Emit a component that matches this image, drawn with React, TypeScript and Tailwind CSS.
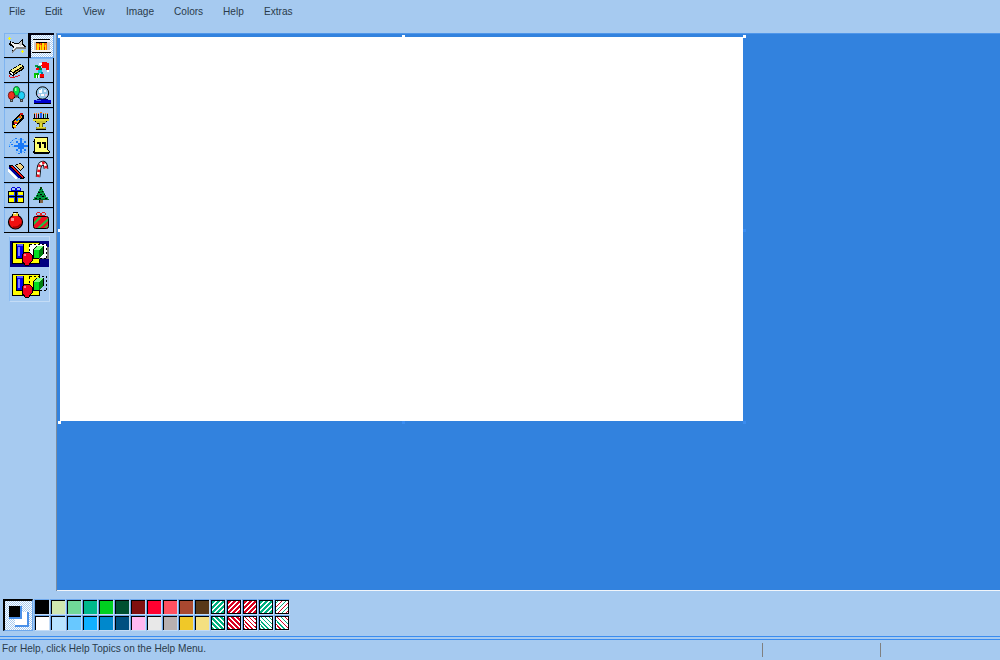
import React from "react";

type R = [number, number, number, number, string];
const Px = ({ r, poly, children }: { r?: R[]; poly?: [string, string][]; children?: React.ReactNode }) => (
  <svg width="25" height="25" viewBox="0 0 25 25" className="block">
    {poly?.map(([p, f], i) => <polygon key={i} points={p} fill={f} shapeRendering="crispEdges" />)}
    {children}
    {r?.map(([x, y, w, h, f], i) => <rect key={i} x={x} y={y} width={w} height={h} fill={f} shapeRendering="crispEdges" />)}
  </svg>
);

const K = "#000000";
const Y = "#ffff00";
const SN = "#1878f8";
const SL = "#70b8ff";
const SC = "#ffff70";
const icons: Record<string, React.ReactNode> = {
  star: <Px poly={[["6,8 11,10 14,10 19,5 19,11 22,14 13,14 8,20 9,14 5,12", K],["7,9 11,11 14,11 18,7 18,12 20,14 13,14 9,17 10,13 7,11", "#f0f0f0"],["13,14 22,14 22,16 13,16 8,20 9,17", "#808080"],["14,11 18,7 18,12 16,13", "#c8c8c8"]]} r={[[4,5,3,1,Y],[5,4,1,3,Y],[17,18,3,1,Y],[18,17,1,3,Y]]} />,
  fire: <Px r={[[4,6,17,1,K],[4,7,17,2,"#f4f4f4"],[4,9,3,8,"#c8c8c8"],[18,9,3,8,"#c8c8c8"],[4,9,1,8,"#ffffff"],[7,9,11,1,K],[7,10,11,7,"#ff7000"],[8,11,2,6,"#ffe000"],[11,12,1,5,"#ffe000"],[13,10,2,7,"#ffe000"],[16,12,1,5,"#ffe000"],[10,10,1,1,"#802000"],[12,10,1,2,"#e02000"],[10,14,1,3,"#e02000"],[15,14,1,3,"#e02000"],[3,17,19,2,"#f4f4f4"],[3,19,19,1,K]]} />,
  eraser: <Px poly={[["5,13 16,6 20,8 20,11 9,18 5,16", K],["6,13 16,7 19,8 9,14", "#f8f080"],["6,14 9,15 9,17 6,15", "#ffffff"],["10,15 19,9 19,10 10,16", "#d8b040"]]} r={[[5,17,1,2,"#e01020"],[6,19,4,1,"#e01020"],[9,18,1,1,"#e01020"],[10,19,1,1,"#e01020"],[11,18,3,1,"#e01020"],[14,17,2,1,"#e01020"]]} />,
  santa: <Px r={[[13,4,5,1,"#f00000"],[12,5,8,3,"#ff0000"],[13,8,7,2,"#ff0000"],[17,10,3,2,"#ff0000"],[10,5,3,2,"#ffffff"],[18,12,2,2,"#ffffff"],[6,7,3,2,"#00a040"],[8,8,4,2,"#007030"],[7,10,3,2,"#ff0000"],[10,10,3,2,"#008040"],[9,12,4,3,"#00d0d0"],[12,14,2,2,"#0080a0"],[5,15,5,2,"#00c000"],[5,17,2,3,"#00d000"],[7,17,3,3,"#ffffff"],[8,15,1,5,"#00a000"],[11,16,4,3,"#ff0000"],[11,19,4,1,"#a00000"]]} />,
  lights: (
    <Px r={[[11,12,3,2,"#505050"],[10,14,1,1,K],[14,14,1,1,K],[6,16,3,3,"#404040"],[7,17,1,1,"#a0a0a0"],[16,16,3,3,"#404040"],[17,17,1,1,"#a0a0a0"],[11,14,3,1,"#808080"]]}>
      <ellipse cx="12.5" cy="8" rx="3.2" ry="4.5" fill="#00e050" stroke="#004000" strokeWidth="0.7" />
      <rect x="11" y="5" width="1.5" height="3" fill="#a0ffa0" />
      <ellipse cx="7.5" cy="12.5" rx="3.2" ry="4" fill="#f03020" stroke="#500000" strokeWidth="0.7" />
      <ellipse cx="17.5" cy="12.5" rx="3.2" ry="4" fill="#20d0f8" stroke="#004060" strokeWidth="0.7" />
    </Px>
  ),
  globe: (
    <Px r={[[10,7,3,3,"#ffffff"],[15,7,2,2,"#e8f0ff"],[9,11,2,2,"#e8c8e8"],[12,11,3,2,"#ffffff"],[16,11,2,2,"#e8c8e8"],[12,6,1,1,"#ffffff"],[8,16,11,1,"#000080"],[5,17,17,3,"#0000d0"],[7,17,5,1,"#4060ff"],[5,20,17,1,K]]}>
      <circle cx="13.5" cy="10" r="6.2" fill="#98c8e8" stroke="#000" strokeWidth="1" />
    </Px>
  ),
  pencil: <Px poly={[["8,14 16,5 20,7 20,10 12,19 9,21 8,19", K],["10,14 16,7 18,9 12,17", "#f0b000"]]} r={[[16,5,3,2,"#c01010"],[15,8,2,2,"#e04020"],[12,11,2,2,"#0060d0"],[14,10,2,2,"#40a0ff"],[10,14,3,2,"#e02020"],[11,16,2,1,"#ffffff"],[9,17,3,2,"#ffe000"],[10,19,2,1,"#f08000"]]} />,
  menorah: <Px r={[[5,6,1,4,K],[7,6,1,4,"#e02020"],[9,6,1,4,K],[11,5,2,5,"#2060f0"],[14,6,1,4,K],[16,6,1,4,"#20a040"],[18,6,1,4,K],[5,5,1,1,"#ff8000"],[7,5,1,1,"#ff8000"],[9,5,1,1,"#ff8000"],[11,4,2,1,"#ff8000"],[14,5,1,1,"#ff8000"],[16,5,1,1,"#ff8000"],[18,5,1,1,"#ff8000"],[4,10,16,1,K],[4,11,16,2,"#e0d830"],[6,13,12,1,K],[7,13,10,2,"#c8c030"],[8,15,8,1,K],[10,15,4,4,"#706800"],[11,15,2,4,"#e0d830"],[7,19,10,2,"#a09820"],[8,19,8,1,"#e0d830"],[7,21,10,1,K]]} />,
  snow: <Px r={[[16,5,2,15,SN],[10,12,14,2,SN],[12,8,2,2,SN],[14,10,2,2,SN],[20,8,2,2,SN],[18,10,2,2,SN],[14,14,2,2,SN],[12,16,2,2,SN],[18,14,2,2,SN],[20,16,2,2,SN],[14,6,2,1,SL],[18,6,2,1,SL],[14,18,2,1,SL],[18,18,2,1,SL],[11,5,2,1,SN],[9,6,2,1,SL],[8,7,1,1,SN],[7,8,1,2,SL],[6,9,1,1,SN],[5,11,1,2,SL],[5,13,1,1,SN],[7,11,2,1,SN],[9,9,1,1,SL],[8,13,2,1,SL],[12,19,1,1,SL],[14,20,2,1,SN],[17,20,1,1,SL],[20,19,1,1,SN]]} />,
  scroll: <Px r={[[6,4,13,1,K],[5,5,14,3,K],[6,5,12,2,SC],[18,5,1,13,K],[5,8,14,9,K],[6,7,12,10,SC],[4,8,1,1,K],[5,17,15,3,K],[6,17,13,2,SC],[4,18,1,2,K],[19,18,1,1,SC],[20,18,1,2,K],[5,20,15,1,K],[8,9,4,2,K],[10,11,2,4,K],[13,9,4,2,K],[15,11,2,4,K],[5,5,1,1,SC]]} />,
  sled: <Px poly={[["5,7 8,7 21,19 19,21 17,21 5,10", K],["6,8 8,8 20,19 18,20", "#f01010"],["5,9 7,10 17,20 15,20 5,11", "#0000a0"],["4,11 14,20 12,21 4,14", "#ffffff"],["11,7 16,5 20,9 17,13 14,11", K],["12,7 16,6 19,9 17,12 14,10", "#f0d080"]]} />,
  cane: (
    <Px>
      <path d="M9,19 L10,10 Q11,5 14,5 Q17,6 17,11" fill="none" stroke="#000" strokeWidth="4.5" />
      <path d="M9,19 L10,10 Q11,5 14,5 Q17,6 17,11" fill="none" stroke="#fff" strokeWidth="2.8" />
      <path d="M9,19 L10,10 Q11,5 14,5 Q17,6 17,11" fill="none" stroke="#e81020" strokeWidth="2.8" strokeDasharray="2.5 2.5" />
    </Px>
  ),
  gift: <Px r={[[8,4,3,1,"#0000e0"],[13,4,3,1,"#0000e0"],[7,5,1,3,"#0000e0"],[11,5,2,3,"#0000e0"],[16,5,1,3,"#0000e0"],[8,7,8,1,"#0000e0"],[4,8,16,12,K],[5,9,14,10,"#ffff00"],[10,9,4,10,"#2040ff"],[5,12,14,3,"#2040ff"],[11,9,2,10,K],[5,13,14,1,K]]} />,
  tree: <Px r={[[11,4,2,2,"#004000"],[10,6,4,2,"#00a040"],[9,8,6,2,"#008030"],[8,10,8,2,"#00a040"],[7,12,10,2,"#008030"],[5,14,14,2,"#00a040"],[4,16,16,1,"#006020"],[11,6,1,1,K],[9,9,2,1,K],[13,8,1,1,K],[11,11,2,1,K],[8,12,1,1,K],[15,11,1,1,K],[13,13,2,1,K],[6,15,2,1,K],[10,15,2,1,K],[16,15,2,1,K],[10,17,4,3,"#806040"],[10,17,1,3,K]]} />,
  ball: (
    <Px r={[[9,4,5,1,K],[9,5,5,3,"#f0d040"],[10,5,2,1,"#ffffff"],[8,6,1,2,K],[14,6,1,2,K]]}>
      <circle cx="11.5" cy="14" r="7" fill="#f01010" stroke="#000" strokeWidth="1.2" />
      <rect x="7" y="10" width="3" height="3" fill="#ff9090" shapeRendering="crispEdges" />
      <path d="M9,19 Q14,20 17,16" stroke="#a00000" strokeWidth="1.5" fill="none" />
    </Px>
  ),
  box: (
    <Px r={[[8,4,3,1,"#e02020"],[13,4,3,1,"#e02020"],[7,5,1,2,"#e02020"],[11,5,2,3,"#e02020"],[16,5,1,2,"#e02020"],[8,7,8,1,"#e02020"]]}>
      <rect x="4.5" y="8.5" width="15" height="12" rx="2" fill="#f01020" stroke="#000" />
      <polygon points="5,14 10,9 13,9 5,17" fill="#20c040" />
      <polygon points="8,20 19,10 19,13 11,20" fill="#20c040" />
      <polygon points="15,20 19,16 19,18 17,20" fill="#20c040" />
    </Px>
  ),
};

const Ball = ({ dashed }: { dashed?: boolean }) => (
  <svg width="37" height="24" viewBox="0 0 37 24" className="block" shapeRendering="crispEdges">
    <rect x="0.5" y="0.5" width="27" height="21" fill="#ffff00" stroke="#000" />
    {!dashed && <rect x="22" y="5" width="15" height="12" fill="#808080" />}
    {!dashed && <rect x="17" y="2" width="18" height="14" fill="#fff" />}
    <rect x="17.5" y="2.5" width="17" height="14" fill="none" stroke="#000" strokeDasharray="2 2" />
    <rect x="4.5" y="2.5" width="7" height="14" fill="#0000f0" stroke="#000" />
    <rect x="5" y="2" width="6" height="2" fill="#6060ff" />
    <rect x="6" y="5" width="2" height="9" fill="#8080ff" />
    <polygon points="13,10 17,10 20,13 20,19 17,23 13,23 10,19 10,13" fill="#f00020" stroke="#000" />
    <rect x="12" y="12" width="2" height="2" fill="#ff8090" />
    <polygon points="21,8 25,4 31,4 31,12 27,16 21,16" fill="#00e020" stroke="#000" />
    <polygon points="27,8 31,4 31,12 27,16" fill="#008010" />
    <polygon points="21,8 25,4 31,4 27,8" fill="#80ff80" />
  </svg>
);

const tools = ["star","fire","eraser","santa","lights","globe","pencil","menorah","snow","scroll","sled","cane","gift","tree","ball","box"];

const dither = "bg-[repeating-conic-gradient(#ffffff_0_25%,#a6caf0_0_50%)] bg-[length:2px_2px]";

const ToolBtn = ({ name, pressed }: { name: string; pressed?: boolean }) => (
  <div className={"w-[25px] h-[25px] " + (pressed ? "shadow-[inset_2px_2px_0_#000010,inset_-1px_-1px_0_#6ea8ec] " + dither : "shadow-[inset_-1px_-1px_0_#000,inset_1px_1px_0_#7fb4f0]")}>
    {icons[name]}
  </div>
);

const top = ["#000000","#cfe8b0","#70d898","#00b88a","#00d020","#005030","#801010","#ff0030","#ff5060","#a84830","#583818"];
const bottom = ["#ffffff","#b8e4ff","#68c8ff","#10b0ff","#0088cc","#005080","#ffb8f0","#e8e8e8","#b8b0b0","#f0c828","#f4e080"];

const Swatch = ({ children, color }: { children?: React.ReactNode; color?: string }) => (
  <div className="w-4 h-4 box-border border border-[#6ea8ec] border-r-[#c4dcf6] border-b-[#c4dcf6]">
    <div className="w-full h-full box-border border-t border-l border-black" style={color ? { backgroundColor: color } : undefined}>
      {children}
    </div>
  </div>
);

const Stripes = ({ fg, fg2, dir, fine }: { fg: string; fg2?: string; dir: 1 | -1; fine?: boolean }) => {
  const lines = fine ? [-12, -8, -4, 0, 4, 8, 12] : [-12, -7, -2, 3, 8, 13];
  return (
    <svg width="13" height="13" viewBox="0 0 13 13" className="block">
      <rect width="13" height="13" fill="#fff" />
      {lines.map((l, i) => (
        <line key={i} x1={l} y1={dir > 0 ? 14 : -1} x2={l + 15} y2={dir > 0 ? -1 : 14} stroke={fg2 && i % 2 ? fg2 : fg} strokeWidth={fine ? 1.4 : 2.4} shapeRendering="crispEdges" />
      ))}
      <rect x="0" y="12" width="13" height="1" fill="#000" />
      <rect x="12" y="0" width="1" height="13" fill="#000" />
    </svg>
  );
};

const G = "#00b080";
const Rd = "#d80020";

const topP = [<Stripes fg={G} dir={1} />, <Stripes fg={Rd} dir={1} />, <Stripes fg={Rd} dir={1} />, <Stripes fg={G} dir={1} />, <Stripes fg={G} fg2={Rd} dir={1} fine />];
const botP = [<Stripes fg={G} dir={-1} />, <Stripes fg={Rd} dir={-1} />, <Stripes fg={Rd} dir={-1} fine />, <Stripes fg={G} dir={-1} fine />, <Stripes fg={G} fg2={Rd} dir={-1} fine />];

const Handle = ({ c, blue }: { c: string; blue?: boolean }) => (
  <div className={"absolute w-[3px] h-[3px] " + c + (blue ? " bg-[#3a8cf0]" : " bg-white")} />
);

const menu: [string, string][] = [["File","w-[36px]"],["Edit","w-[38px]"],["View","w-[43px]"],["Image","w-[48px]"],["Colors","w-[49px]"],["Help","w-[41px]"],["Extras","w-[40px]"]];

export default function App() {
  return (
    <div className="w-[1000px] h-[660px] flex flex-col bg-[#a6caf0] overflow-hidden text-[10.1px] text-[#2a3a4a] font-['Liberation_Sans',sans-serif]">
      <div className="h-[33px] shrink-0 flex items-start pt-[3px] pl-[9px] leading-[17px]">
        {menu.map(([m, w]) => <span key={m} className={w}>{m}</span>)}
      </div>
      <div className="flex-1 flex min-h-0">
        <div className="w-[57px] shrink-0 pl-1 border-r border-[#7a8ca0]">
          <div className="grid grid-cols-[25px_25px]">
            {tools.map((t, i) => <ToolBtn key={t} name={t} pressed={i === 1} />)}
          </div>
          <div className="ml-[5px] mt-[3px] w-[41px] h-[66px] border border-[#c4dcf6] border-l-[#8cbcf2] flex flex-col pt-1 gap-[5px]">
            <div className="w-[39px] h-[26px] bg-[#000080] pl-[2px] pt-[1px] overflow-hidden"><Ball /></div>
            <div className="w-[39px] h-[26px] pl-[2px] pt-[2px]"><Ball dashed /></div>
          </div>
        </div>
        <div className="flex-1 bg-[#3282de] border-b border-b-[#f2f6fb] pl-[2px] pt-[3px] min-w-0 border-t border-t-[#4f96ea]">
          <div className="relative w-[683px] h-[384px] ml-[1px] bg-white">
            <Handle c="-left-[2px] -top-[2px]" />
            <Handle c="left-[342px] -top-[2px]" />
            <Handle c="-right-[3px] -top-[2px]" />
            <Handle c="-left-[2px] top-[192px]" />
            <Handle c="-right-[3px] top-[192px]" blue />
            <Handle c="-left-[2px] -bottom-[3px]" />
            <Handle c="left-[342px] -bottom-[3px]" blue />
            <Handle c="-right-[3px] -bottom-[3px]" blue />
          </div>
        </div>
      </div>
      <div className="h-[45px] shrink-0 flex items-start pl-[3px] pt-[8px]">
        <div className={"w-[30px] h-[32px] relative box-border border-t-2 border-l-2 border-black border-r border-b border-r-[#6ea8ec] border-b-[#6ea8ec] " + dither}>
          <div className="absolute left-[10px] top-[11px] w-[14px] h-[15px] bg-white border-r-2 border-b-2 border-[#4a90e8]" />
          <div className="absolute left-[4px] top-[5px] w-[13px] h-[13px] bg-black border-r-2 border-b-2 border-[#4a90e8]" />
        </div>
        <div className="ml-[1px]">
          <div className="flex">
            {top.map((c) => <Swatch key={c} color={c} />)}
            {topP.map((p, i) => <Swatch key={i}>{p}</Swatch>)}
          </div>
          <div className="flex">
            {bottom.map((c) => <Swatch key={c} color={c} />)}
            {botP.map((p, i) => <Swatch key={i}>{p}</Swatch>)}
          </div>
        </div>
      </div>
      <div className="h-[4px] shrink-0 border-y border-[#3a8cf0]" />
      <div className="h-[20px] shrink-0 flex items-start pl-[2px] relative">
        <span className="leading-[18px]">For Help, click Help Topics on the Help Menu.</span>
        <div className="absolute left-[762px] top-[3px] w-px h-[14px] bg-[#808080]" />
        <div className="absolute left-[880px] top-[3px] w-px h-[14px] bg-[#808080]" />
      </div>
    </div>
  );
}
